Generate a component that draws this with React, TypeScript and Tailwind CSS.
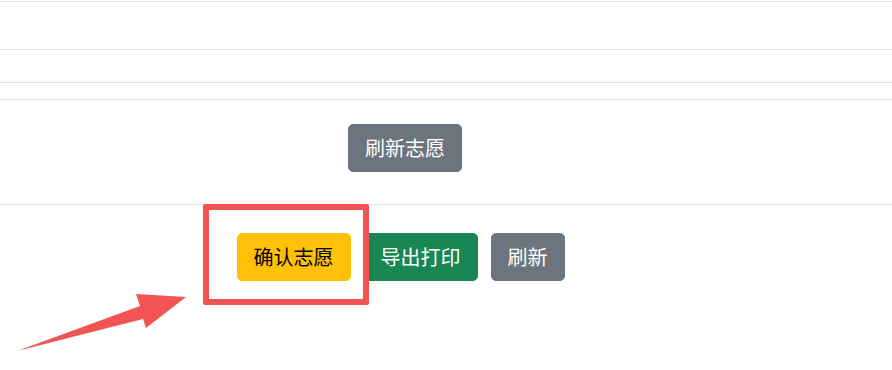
import React from "react"

// Bootstrap-like large button
function Btn({ tone, children }: { tone: "warning" | "success" | "secondary"; children: React.ReactNode }) {
  const cls =
    tone === "warning"
      ? "bg-[#ffc107] border-[#ffc107] text-black"
      : tone === "success"
      ? "bg-[#198754] border-[#198754] text-white"
      : "bg-[#6c757d] border-[#6c757d] text-white"
  return (
    <button className={`px-4 py-2 border rounded-[5px] text-[20px] leading-[30px] ${cls}`}>
      {children}
    </button>
  )
}

export default function App() {
  return (
    <div
      className="relative w-[892px] h-[370px] bg-white overflow-hidden"
      style={{ fontFamily: '"Microsoft YaHei", "Noto Sans CJK SC", sans-serif' }}
    >
      <div className="pt-px">
        <div className="h-[48px] border-t border-[#dee2e6]" />
        <div className="h-[33px] border-t border-[#dee2e6]" />
        <div className="h-[17px] border-t border-[#dee2e6]" />
        <div className="h-[105px] border-t border-[#dee2e6] pt-[24px]">
          <div className="w-[810px] flex justify-center items-start">
            <Btn tone="secondary">刷新志愿</Btn>
          </div>
        </div>
        <div className="border-t border-[#dee2e6] pt-[28px]">
          <div className="w-[801px] flex justify-center items-start gap-[13px]">
            <Btn tone="warning">确认志愿</Btn>
            <Btn tone="success">导出打印</Btn>
            <Btn tone="secondary">刷新</Btn>
          </div>
        </div>
      </div>

      {/* annotation: highlight box */}
      <div className="absolute left-[203px] top-[204px] w-[166px] h-[101px] border-[6px] border-[#f25353] rounded-[2px]" />

      {/* annotation: arrow */}
      <svg className="absolute left-0 top-0" width="892" height="370" viewBox="0 0 892 370">
        <polygon
          points="17,351 140,306 136,294 186,297 146,328 143,319"
          fill="#f25353"
        />
      </svg>
    </div>
  )
}
